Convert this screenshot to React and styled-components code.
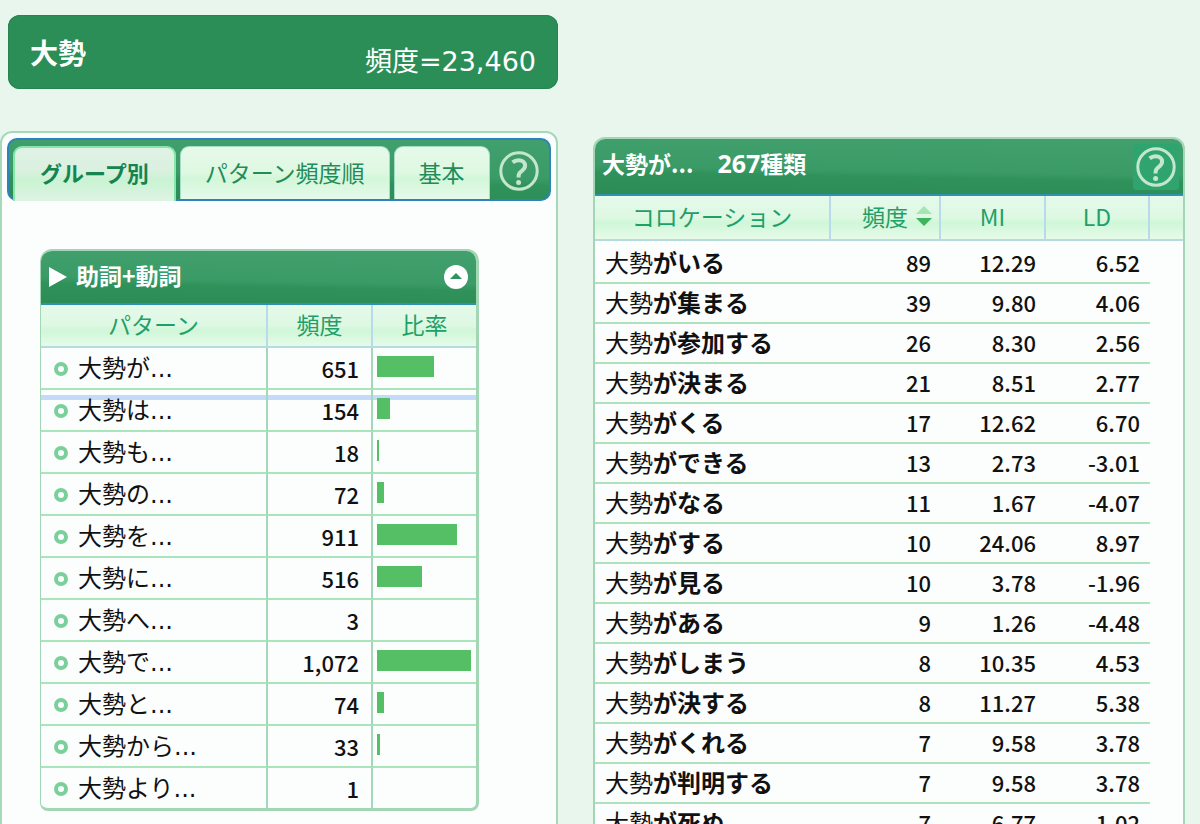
import React from "react";
import styled, { createGlobalStyle, css } from "styled-components";

const GlobalStyle = createGlobalStyle`
  *, *::before, *::after { box-sizing: border-box; }
  body {
    margin: 0;
    background: #e8f6ed;
    color: #111;
    font-family: "Noto Sans CJK JP", "Noto Sans", sans-serif;
  }
`;

const gloss = css`
  background: linear-gradient(
    181deg,
    #41a06d 0%,
    #3b9b67 56%,
    #30925b 66%,
    #2b8c54 100%
  );
`;

const Page = styled.main`
  height: 100vh;
  overflow: hidden;
  display: grid;
  grid-template-columns: minmax(0, 279fr) minmax(0, 296fr);
  grid-template-rows: 74px max-content;
  column-gap: 35px;
  row-gap: 42px;
  padding: 15px 15px 0 0;
`;

const WordBar = styled.header`
  grid-column: 1;
  margin-left: 8px;
  padding: 0 22px;
  display: flex;
  justify-content: space-between;
  border-radius: 12px;
  background: #2b8e57;
  box-shadow: inset 0 0 0 1px #278450;
  color: #fff;
`;

const Word = styled.h1`
  margin: 0;
  font-size: 28px;
  line-height: 74px;
  font-weight: 700;
`;

const Total = styled.p`
  margin: 0;
  padding-top: 20px;
  font-family: "DejaVu Sans", "Noto Sans CJK JP", sans-serif;
  font-size: 27px;
  line-height: 54px;
`;

const PatternPanel = styled.section`
  grid-column: 1;
  grid-row: 2;
  padding: 5px;
  border: 2px solid #a6d8ba;
  border-radius: 12px;
  background: #fcfdfd;
`;

const TabBar = styled.div`
  ${gloss}
  background-origin: border-box;
  height: 63px;
  display: flex;
  gap: 4px;
  padding: 6px 10px 0 4px;
  border: 2px solid #2f82bb;
  border-radius: 10px;
`;

const Tab = styled.button`
  flex: none;
  padding: 0 24px 2px;
  border: 1px solid #a4dcc8;
  border-bottom: 0;
  border-radius: 9px 9px 0 0;
  background: linear-gradient(#e6f9e9 0%, #def8e2 50%, #d2f7d9 60%, #e6fae9 100%);
  color: #1f8c5a;
  font: 400 23px/46px "Noto Sans CJK JP", sans-serif;
  cursor: pointer;

  ${(p) =>
    p.$active &&
    css`
      margin-bottom: -2px;
      border: 2px solid #86e6ab;
      border-bottom: 0;
      padding: 0 25px 6px;
      background: linear-gradient(#e0f2e5 0%, #daf0df 45%, #c9f3d2 60%, #def4e4 100%);
      color: #148450;
      font-size: 22px;
      font-weight: 700;
    `}
`;

const HelpButton = styled.button`
  flex: none;
  margin: 0 0 0 auto;
  padding: ${(p) => (p.$boxed ? "3px" : "0")};
  border: 0;
  border-radius: 3px;
  background: ${(p) => (p.$boxed ? "#2fa46f" : "transparent")};
  line-height: 0;
  cursor: pointer;
`;

const TabHelp = styled.div`
  align-self: center;
  margin-left: auto;
  padding-bottom: 4px;
  line-height: 0;
`;

const Card = styled.section`
  overflow: hidden;
  border: 2px solid #a2d6b5;
  border-radius: 12px 12px 0 0;
  background: #fcfefd;
`;

const GroupCard = styled(Card)`
  margin: 48px 72px 0 33px;
  border-width: 2px 3px 3px 1px;
  border-radius: 12px 12px 8px 8px;
`;

const ResultCard = styled(Card)`
  grid-column: 2;
  grid-row: 2;
  margin-top: 6px;
`;

const CardHead = styled.header`
  ${gloss}
  display: flex;
  align-items: center;
  height: ${(p) => (p.$tall ? "57px" : "54px")};
  padding: ${(p) => (p.$tall ? "0 4px 0 7px" : "0 8px")};
  border-bottom: 2px solid #3191b0;
  color: #fff;
`;

const CardTitle = styled.h2`
  margin: 0;
  padding-bottom: ${(p) => (p.$raised ? "8px" : "4px")};
  font-size: 23px;
  line-height: 32px;
  font-weight: 700;
  display: flex;
  gap: 24px;
`;

const KindCount = styled.span`
  font-family: "Noto Sans", sans-serif;
  font-size: 25px;
`;

const Arrow = styled.svg`
  flex: none;
  margin-right: 9px;
`;

const CollapseButton = styled.button`
  margin-left: auto;
  width: 24px;
  height: 24px;
  padding: 0;
  border: 0;
  border-radius: 12px;
  background: #fff;
  line-height: 0;
  cursor: pointer;
`;

const Table = styled.table`
  width: 100%;
  table-layout: fixed;
  border-collapse: separate;
  border-spacing: 0;
`;

const Th = styled.th`
  height: ${(p) => (p.$tall ? "45px" : "43px")};
  padding: 0 0 4px;
  border-right: 2px solid #b9d9ec;
  border-bottom: 2px solid #b5dcdc;
  background: linear-gradient(#e5faea 0%, #ddf8e3 50%, #cff7d8 62%, #e6fbe9 100%);
  color: #1fa068;
  font-size: 23px;
  line-height: 32px;
  font-weight: 400;
  text-align: center;
  white-space: nowrap;

  &:last-child { border-right: 0; }
`;

const SortButton = styled.button`
  display: flex;
  align-items: center;
  justify-content: flex-end;
  gap: 8px;
  width: 100%;
  padding: 0 7px 0 0;
  border: 0;
  background: none;
  color: inherit;
  font: inherit;
  cursor: pointer;
`;

const PatternRow = styled.tr`
  ${(p) =>
    p.$marked &&
    css`
      background: linear-gradient(
        transparent 5px,
        #c3dbf9 5px,
        #c3dbf9 10px,
        transparent 10px
      );
    `}

  &:last-child td {
    height: 40px;
    border-bottom: 0;
  }
`;

const PatternCell = styled.td`
  height: 42px;
  padding: 1px 0 0 13px;
  border-right: 2px solid #a3d9bb;
  border-bottom: 2px solid #aae4ba;
  vertical-align: middle;
  line-height: 32px;

  &:last-child { border-right: 0; }
`;

const PatternCount = styled(PatternCell)`
  padding: 0 12px 0 0;
  font-size: 22px;
  font-weight: 500;
  text-align: right;
`;

const RatioCell = styled(PatternCell)`
  padding: 8px 5px 0 4px;
  vertical-align: top;
`;

const Ratio = styled.div`
  height: 21px;
  background: #55bf66;
`;

const PatternLink = styled.a`
  display: flex;
  align-items: center;
  gap: 10px;
  color: #111;
  font-family: "DejaVu Sans", "Noto Sans CJK JP", sans-serif;
  font-size: 24px;
  text-decoration: none;

  &::before {
    content: "";
    width: 14px;
    height: 14px;
    border: 4px solid #7ad09b;
    border-radius: 50%;
  }
`;

const ResultBody = styled.tbody`
  &::before {
    content: "";
    display: table-row;
    height: 3px;
  }
`;

const ResultCell = styled.td`
  height: 40px;
  padding: 0 10px 2px 0;
  border-bottom: 2px solid #ade2bc;
  font-size: 22px;
  line-height: 32px;
  font-weight: 500;
  text-align: right;
  white-space: nowrap;

  &:last-child { border-bottom: 0; }
`;

const PhraseCell = styled(ResultCell)`
  padding: 0 0 2px 10px;
  text-align: left;
`;

const Phrase = styled.a`
  color: #111;
  font-size: 24px;
  font-weight: 400;
  text-decoration: none;
`;

const patterns = [
  ["大勢が...", 651],
  ["大勢は...", 154],
  ["大勢も...", 18],
  ["大勢の...", 72],
  ["大勢を...", 911],
  ["大勢に...", 516],
  ["大勢へ...", 3],
  ["大勢で...", 1072],
  ["大勢と...", 74],
  ["大勢から...", 33],
  ["大勢より...", 1],
];

const maxCount = Math.max(...patterns.map(([, count]) => count));

const results = [
  ["がいる", 89, "12.29", "6.52"],
  ["が集まる", 39, "9.80", "4.06"],
  ["が参加する", 26, "8.30", "2.56"],
  ["が決まる", 21, "8.51", "2.77"],
  ["がくる", 17, "12.62", "6.70"],
  ["ができる", 13, "2.73", "-3.01"],
  ["がなる", 11, "1.67", "-4.07"],
  ["がする", 10, "24.06", "8.97"],
  ["が見る", 10, "3.78", "-1.96"],
  ["がある", 9, "1.26", "-4.48"],
  ["がしまう", 8, "10.35", "4.53"],
  ["が決する", 8, "11.27", "5.38"],
  ["がくれる", 7, "9.58", "3.78"],
  ["が判明する", 7, "9.58", "3.78"],
  ["が死ぬ", 7, "6.77", "1.02"],
];

function Help({ boxed }) {
  return (
    <HelpButton type="button" aria-label="ヘルプ" $boxed={boxed}>
      <svg width="40" height="40" viewBox="0 0 40 40" fill="none" stroke="#c3e6cd">
        <circle cx="20" cy="20" r="18.2" strokeWidth="3" />
        <path
          d="M13.6 11.4c1.8-1.5 3.8-2.2 5.9-2.2 4.2 0 6.6 2.1 6.6 5.4 0 2.6-1.5 4.1-3.5 5.5-2.1 1.5-3 2.6-3 5v1.4"
          strokeWidth="4"
        />
        <circle cx="19.6" cy="31.4" r="2.5" fill="#c3e6cd" stroke="none" />
      </svg>
    </HelpButton>
  );
}

export default function App() {
  return (
    <>
      <GlobalStyle />
      <Page>
        <WordBar>
          <Word>大勢</Word>
          <Total>頻度=23,460</Total>
        </WordBar>

        <PatternPanel>
          <TabBar>
            <Tab type="button" $active>グループ別</Tab>
            <Tab type="button">パターン頻度順</Tab>
            <Tab type="button">基本</Tab>
            <TabHelp>
              <Help />
            </TabHelp>
          </TabBar>

          <GroupCard>
            <CardHead>
              <Arrow width="18" height="20" viewBox="0 0 18 20" fill="#fff">
                <path d="M0 0L18 10L0 20Z" />
              </Arrow>
              <CardTitle>助詞+動詞</CardTitle>
              <CollapseButton type="button" aria-label="閉じる">
                <svg width="24" height="24" viewBox="0 0 24 24" fill="#2f9360">
                  <path d="M6 14L12 8L18 14Z" />
                </svg>
              </CollapseButton>
            </CardHead>
            <Table>
              <colgroup>
                <col />
                <col style={{ width: 105 }} />
                <col style={{ width: 103 }} />
              </colgroup>
              <thead>
                <tr>
                  <Th scope="col">パターン</Th>
                  <Th scope="col">頻度</Th>
                  <Th scope="col">比率</Th>
                </tr>
              </thead>
              <tbody>
                {patterns.map(([text, count], i) => (
                  <PatternRow key={text} $marked={i === 1}>
                    <PatternCell>
                      <PatternLink href="#">{text}</PatternLink>
                    </PatternCell>
                    <PatternCount>{count.toLocaleString("en-US")}</PatternCount>
                    <RatioCell>
                      <Ratio style={{ width: `${Math.round((count / maxCount) * 100)}%` }} />
                    </RatioCell>
                  </PatternRow>
                ))}
              </tbody>
            </Table>
          </GroupCard>
        </PatternPanel>

        <ResultCard>
          <CardHead $tall>
            <CardTitle $raised>
              <span>大勢が...</span>
              <span>
                <KindCount>267</KindCount>種類
              </span>
            </CardTitle>
            <Help boxed />
          </CardHead>
          <Table>
            <colgroup>
              <col />
              <col style={{ width: 110 }} />
              <col style={{ width: 105 }} />
              <col style={{ width: 104 }} />
              <col style={{ width: 33 }} />
            </colgroup>
            <thead>
              <tr>
                <Th scope="col" $tall>コロケーション</Th>
                <Th scope="col" $tall aria-sort="descending">
                  <SortButton type="button">
                    頻度
                    <svg width="16" height="20" viewBox="0 0 16 20">
                      <path d="M0 8L8 0L16 8Z" fill="#a5e4b3" />
                      <path d="M0 12H16L8 20Z" fill="#3fb45c" />
                    </svg>
                  </SortButton>
                </Th>
                <Th scope="col" $tall>MI</Th>
                <Th scope="col" $tall>LD</Th>
                <Th $tall />
              </tr>
            </thead>
            <ResultBody>
              {results.map(([text, count, mi, ld]) => (
                <tr key={text}>
                  <PhraseCell>
                    <Phrase href="#">
                      大勢<b>{text}</b>
                    </Phrase>
                  </PhraseCell>
                  <ResultCell>{count}</ResultCell>
                  <ResultCell>{mi}</ResultCell>
                  <ResultCell>{ld}</ResultCell>
                  <ResultCell />
                </tr>
              ))}
            </ResultBody>
          </Table>
        </ResultCard>
      </Page>
    </>
  );
}
